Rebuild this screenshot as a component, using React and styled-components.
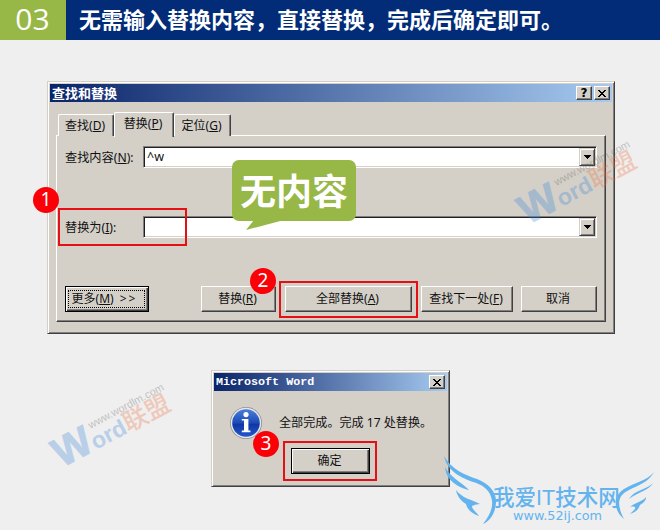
import React from 'react';
import styled, { createGlobalStyle } from 'styled-components';

function Key({ children }) {
  return (
    <>
      (<Accel>{children}</Accel>)
    </>
  );
}

function CloseButton() {
  return (
    <CaptionButton>
      <svg width="8" height="7" viewBox="0 0 8 7" shapeRendering="crispEdges">
        <path d="M0 0h2v1h1v1h2v-1h1v-1h2v1h-1v1h-1v1h-1v1h1v1h1v1h1v1h-2v-1h-1v-1h-2v1h-1v1h-2v-1h1v-1h1v-1h1v-1h-1v-1h-1v-1h-1z" />
      </svg>
    </CaptionButton>
  );
}

function Combo({ value }) {
  return (
    <ComboBox>
      <ComboValue>{value}</ComboValue>
      <ComboArrow>
        <svg width="7" height="4" viewBox="0 0 7 4" shapeRendering="crispEdges">
          <path d="M0 0h7v1h-1v1h-1v1h-1v1h-1v-1h-1v-1h-1v-1h-1z" />
        </svg>
      </ComboArrow>
    </ComboBox>
  );
}

function Watermark({ left, top }) {
  return (
    <Mark $left={left} $top={top}>
      <MarkUrl>www.wordlm.com</MarkUrl>
      <MarkName>
        <MarkBig>W</MarkBig>
        <MarkSmall>ord</MarkSmall>
        <MarkCn>联盟</MarkCn>
      </MarkName>
    </Mark>
  );
}

function InfoIcon() {
  return (
    <svg width="34" height="34" viewBox="0 0 34 34">
      <defs>
        <linearGradient id="ball" x1="0" y1="0" x2="0" y2="1">
          <stop offset="0" stopColor="#4a7fd8" />
          <stop offset="0.5" stopColor="#1c49b8" />
          <stop offset="0.55" stopColor="#0f37a4" />
          <stop offset="1" stopColor="#2458cc" />
        </linearGradient>
      </defs>
      <circle cx="17" cy="17" r="16" fill="#8c8f96" />
      <circle cx="17" cy="17" r="15.2" fill="#e4e6ea" />
      <circle cx="17" cy="17" r="13.8" fill="url(#ball)" />
      <circle cx="17" cy="8.6" r="2.6" fill="#fff" />
      <path d="M12.8 13h6.6v11.6h2v1.6h-8.6v-1.6h2.2v-10h-2.2z" fill="#fff" />
    </svg>
  );
}

function SiteLogo() {
  return (
    <Logo>
      <svg width="218" height="76" viewBox="442 454 218 76" fill="#63b3ee">
        <path d="M444 456C451 469 465 475 477 479C488 483 497 492 496 503C495 514 490 521 483 524C489 516 493 509 492 501C491 492 485 486 475 482.500C461 478 447 471 444 456Z" />
        <path d="M445 467C450 477 460 481 469 490C457 487 446 480 445 467Z" />
        <path d="M456 490C462 498 470 499 480 504C475 505 472 505 472 507C473 510 477 513 479 516C470 513 467 508 466 504C461 501 457 496 456 490Z" />
        <path d="M654 472C648 483 638 485 629 490C618 495 616 504 624 519C614 511 612 497 624 489C635 482 647 481 654 472Z" />
        <path d="M653 483C648 491 640 491 629 499C635 489 647 490 653 483Z" />
        <path d="M646 497C642 502 636 502 630 507C634 506 636 507 635 509L630 514C638 511 638 509 640 505C643 503 646 501 646 497Z" />
      </svg>
      <LogoName>
        我爱<LogoLatin>IT</LogoLatin>技术网
      </LogoName>
      <LogoUrl>www.52ij.com</LogoUrl>
    </Logo>
  );
}

export default function App() {
  return (
    <Page>
      <GlobalStyle />
      <Header>
        <Step>03</Step>
        <Heading>无需输入替换内容，直接替换，完成后确定即可。</Heading>
      </Header>

      <ReplaceDialog>
        <TitleBar>
          <Caption>查找和替换</Caption>
          <CaptionButtons>
            <CaptionButton>?</CaptionButton>
            <CloseButton />
          </CaptionButtons>
        </TitleBar>
        <Tabs>
          <Tab $width={56}>查找<Key>D</Key></Tab>
          <Tab $width={60} $active>替换<Key>P</Key></Tab>
          <Tab $width={57}>定位<Key>G</Key></Tab>
        </Tabs>
        <Panel>
          <Field>
            <Label>查找内容<Key>N</Key>:</Label>
            <Combo value="^w" />
          </Field>
          <Field>
            <Label>替换为<Key>I</Key>:</Label>
            <Combo />
          </Field>
          <Actions>
            <DefaultButton $width={84}>
              <Focus>更多<Key>M</Key> <Chevrons>&gt;&gt;</Chevrons></Focus>
            </DefaultButton>
            <Group>
              <Button $width={75}>替换<Key>R</Key></Button>
              <Button $width={127}>全部替换<Key>A</Key></Button>
              <Button $width={92}>查找下一处<Key>F</Key></Button>
              <CancelButton $width={76}>取消</CancelButton>
            </Group>
          </Actions>
        </Panel>
      </ReplaceDialog>

      <MessageDialog>
        <TitleBar>
          <MonoCaption>Microsoft Word</MonoCaption>
          <CaptionButtons>
            <CloseButton />
          </CaptionButtons>
        </TitleBar>
        <Message>
          <InfoIcon />
          <MessageText>全部完成。完成 17 处替换。</MessageText>
        </Message>
        <Confirm>
          <DefaultButton $width={79}>确定</DefaultButton>
        </Confirm>
      </MessageDialog>

      <Watermark left={71} top={471} />
      <Watermark left={537} top={228} />

      <Callout>
        无内容
        <Tail width="40" height="11" viewBox="0 0 40 11">
          <path d="M10 0H40L2 10Z" fill="#97b747" />
        </Tail>
      </Callout>

      <Frame $left={58} $top={208} $width={129} $height={38} />
      <Frame $left={279} $top={281} $width={139} $height={37} />
      <Frame $left={283} $top={441} $width={94} $height={40} />
      <Badge $left={33} $top={187}>1</Badge>
      <Badge $left={250} $top={268}>2</Badge>
      <Badge $left={253} $top={431}>3</Badge>

      <SiteLogo />
    </Page>
  );
}

const GlobalStyle = createGlobalStyle`
  * {
    box-sizing: border-box;
  }

  body {
    margin: 0;
    background: #efefef;
  }
`;

const Page = styled.div`
  position: relative;
  width: 660px;
  height: 530px;
  overflow: hidden;
  background: #efefef;
  color: #111;
  font-family: 'Noto Sans', 'Noto Sans CJK SC', sans-serif;
  font-size: 12px;
  line-height: 16px;
`;

const Header = styled.header`
  display: flex;
  height: 40px;
  background: #022c78;
  color: #fff;
`;

const Step = styled.div`
  width: 66px;
  padding-right: 1px;
  background: #97b747;
  font-family: 'Open Sans', sans-serif;
  font-size: 30px;
  line-height: 37px;
  text-align: center;
`;

const Heading = styled.h1`
  margin: 0;
  padding-left: 13px;
  font-family: 'Noto Sans CJK SC', sans-serif;
  font-size: 22px;
  font-weight: 700;
  line-height: 36px;
  white-space: nowrap;
`;

const Dialog = styled.section`
  display: flex;
  flex-direction: column;
  padding: 2px;
  background: #d4d0c8;
  border: 1px solid;
  border-color: #d4d0c8 #404040 #404040 #d4d0c8;
  box-shadow: inset 1px 1px #fff, inset -1px -1px #808080;
`;

const ReplaceDialog = styled(Dialog)`
  width: 568px;
  height: 253px;
  margin: 41px 0 0 47px;
`;

const MessageDialog = styled(Dialog)`
  width: 239px;
  height: 117px;
  margin: 36px 0 0 211px;
`;

const TitleBar = styled.div`
  display: flex;
  justify-content: space-between;
  align-items: center;
  flex: none;
  height: 18px;
  padding: 0 2px;
  background: linear-gradient(90deg, #0a246a, #a6caf0);
  color: #fff;
`;

const Caption = styled.div`
  font-family: 'Noto Sans CJK SC', sans-serif;
  font-size: 13px;
  font-weight: 700;
`;

const MonoCaption = styled(Caption)`
  font-family: 'Liberation Mono', monospace;
  font-size: 11.7px;
`;

const CaptionButtons = styled.div`
  display: flex;
  gap: 2px;
`;

const CaptionButton = styled.div`
  display: flex;
  justify-content: center;
  align-items: center;
  width: 16px;
  height: 14px;
  background: #d4d0c8;
  border: 1px solid;
  border-color: #fff #404040 #404040 #fff;
  box-shadow: inset -1px -1px #808080;
  color: #000;
  font-family: 'DejaVu Sans', sans-serif;
  font-size: 12px;
  font-weight: 700;
`;

const Tabs = styled.div`
  display: flex;
  align-items: flex-end;
  flex: none;
  height: 34px;
  padding-left: 8px;
`;

const Tab = styled.div`
  position: relative;
  z-index: ${(props) => (props.$active ? 1 : 0)};
  width: ${(props) => props.$width}px;
  height: ${(props) => (props.$active ? 25 : 22)}px;
  margin-bottom: ${(props) => (props.$active ? -1 : 0)}px;
  padding: 3px 2px 0 0;
  background: #d4d0c8;
  border: 1px solid #fff;
  border-right-color: #404040;
  border-bottom: 0;
  border-radius: 2px 2px 0 0;
  box-shadow: inset -1px 0 #808080;
  text-align: center;
`;

const Panel = styled.div`
  flex: none;
  width: 550px;
  height: 187px;
  margin: -1px 0 0 6px;
  padding: 10px 8px 0;
  border: 1px solid;
  border-color: #fff #404040 #404040 #fff;
  box-shadow: inset -1px -1px #808080;
`;

const Field = styled.div`
  display: flex;
  align-items: center;
  margin-bottom: 48px;
`;

const Label = styled.div`
  width: 78px;
  padding-top: 2px;
  font-size: 12.2px;
  white-space: nowrap;
`;

const Accel = styled.span`
  text-decoration: underline;
  text-underline-offset: 1px;
`;

const ComboBox = styled.div`
  display: flex;
  width: 454px;
  height: 22px;
  border: 1px solid;
  border-color: #808080 #fff #fff #808080;
  padding: 1px;
  background: #fff;
  box-shadow: inset 1px 1px #202020, inset -1px -1px #d4d0c8;
`;

const ComboValue = styled.div`
  flex: 1;
  padding: 1px 2px;
  font-size: 12.5px;
`;

const ComboArrow = styled.div`
  display: flex;
  justify-content: center;
  align-items: center;
  width: 16px;
  background: #d4d0c8;
  border: 1px solid;
  border-color: #d4d0c8 #404040 #404040 #d4d0c8;
  box-shadow: inset 1px 1px #fff, inset -1px -1px #808080;
`;

const Actions = styled.div`
  display: flex;
  justify-content: space-between;
  width: 532px;
`;

const Group = styled.div`
  display: flex;
  gap: 9px;
`;

const Button = styled.div`
  display: flex;
  justify-content: center;
  align-items: center;
  width: ${(props) => props.$width}px;
  height: 26px;
  padding-right: 2px;
  background: #d4d0c8;
  border: 1px solid;
  border-color: #fff #404040 #404040 #fff;
  box-shadow: inset -1px -1px #808080;
  white-space: nowrap;
`;

const CancelButton = styled(Button)`
  margin-left: -1px;
`;

const DefaultButton = styled(Button)`
  border-color: #000;
  box-shadow: inset 1px 1px #fff, inset -1px -1px #404040, inset -2px -2px #808080;
`;

const Focus = styled.div`
  width: 77px;
  height: 18px;
  border: 1px dotted #000;
  padding-left: 3px;
`;

const Chevrons = styled.span`
  margin-left: 3px;
  letter-spacing: 2px;
`;

const Message = styled.div`
  display: flex;
  align-items: center;
  height: 34px;
  margin: 15px 0 0 15px;
`;

const MessageText = styled.div`
  padding-left: 16px;
  font-size: 12.1px;
  white-space: nowrap;
`;

const Confirm = styled.div`
  margin: 8px 0 0 77px;
`;

const Callout = styled.div`
  position: absolute;
  left: 232px;
  top: 160px;
  width: 124px;
  height: 61px;
  border-radius: 7px;
  background: #97b747;
  color: #fff;
  font-family: 'Noto Sans CJK SC', sans-serif;
  font-size: 36px;
  font-weight: 700;
  line-height: 58px;
  text-align: center;
`;

const Tail = styled.svg`
  position: absolute;
  left: 12px;
  top: 60px;
`;

const Frame = styled.div`
  position: absolute;
  left: ${(props) => props.$left}px;
  top: ${(props) => props.$top}px;
  width: ${(props) => props.$width}px;
  height: ${(props) => props.$height}px;
  border: 2px solid #e60f14;
`;

const Badge = styled.div`
  position: absolute;
  left: ${(props) => props.$left}px;
  top: ${(props) => props.$top}px;
  width: 26px;
  height: 26px;
  border-radius: 50%;
  background: #fb0007;
  color: #fff;
  font-size: 19px;
  line-height: 25px;
  text-align: center;
`;

const Mark = styled.div`
  position: absolute;
  left: ${(props) => props.$left}px;
  top: ${(props) => props.$top - 50}px;
  width: 140px;
  height: 50px;
  transform: rotate(-28deg);
  transform-origin: 0 100%;
  opacity: 0.3;
  font-family: 'Liberation Sans', sans-serif;
  white-space: nowrap;
`;

const MarkUrl = styled.div`
  padding: 12px 0 0 37px;
  color: #555;
  font-size: 10.8px;
  line-height: 12px;
`;

const MarkName = styled.div`
  display: flex;
  align-items: baseline;
  margin: -14px 0 0 -7px;
  color: #3c86d6;
  line-height: 38px;
`;

const MarkBig = styled.span`
  font-size: 41px;
  font-weight: 700;
  -webkit-text-stroke: 1px #3c86d6;
`;

const MarkSmall = styled.span`
  font-size: 23px;
  font-weight: 700;
`;

const MarkCn = styled.span`
  color: #ee7040;
  font-family: 'Noto Sans CJK SC', sans-serif;
  font-size: 25px;
  font-weight: 500;
`;

const Logo = styled.div`
  position: absolute;
  left: 442px;
  top: 454px;
  width: 218px;
  height: 76px;
  color: #63b3ee;
  white-space: nowrap;
`;

const LogoName = styled.div`
  position: absolute;
  left: 51px;
  top: 29px;
  font-family: 'Noto Sans CJK SC', sans-serif;
  font-size: 21.5px;
  font-weight: 500;
  line-height: 26px;
`;

const LogoLatin = styled.span`
  font-family: 'Liberation Sans', sans-serif;
`;

const LogoUrl = styled.div`
  position: absolute;
  left: 71px;
  top: 54px;
  font-family: 'DejaVu Sans', sans-serif;
  font-size: 12.8px;
`;
